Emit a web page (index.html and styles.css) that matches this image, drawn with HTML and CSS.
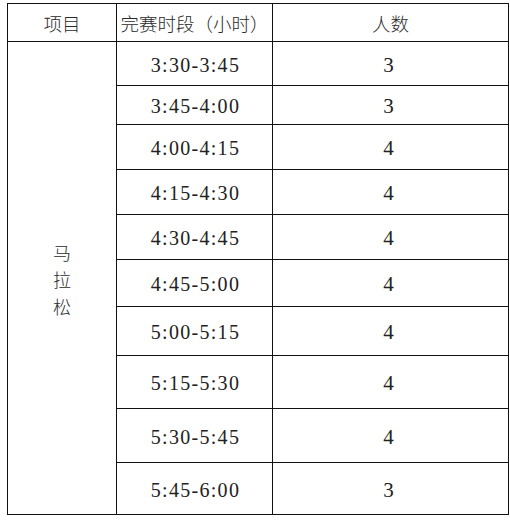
FILE: index.html
```html
<!DOCTYPE html>
<html lang="zh-CN">
<head>
<meta charset="utf-8">
<title>马拉松完赛时段</title>
<link rel="stylesheet" href="styles.css">
</head>
<body>
<div class="sheet">
  <div class="cell head">项目</div>
  <div class="cell head">完赛时段（小时）</div>
  <div class="cell head">人数</div>

  <div class="cell event"><span>马</span><span>拉</span><span>松</span></div>

  <div class="cell time r1">3:30-3:45</div><div class="cell num r1">3</div>
  <div class="cell time r2">3:45-4:00</div><div class="cell num r2">3</div>
  <div class="cell time r3">4:00-4:15</div><div class="cell num r3">4</div>
  <div class="cell time r4">4:15-4:30</div><div class="cell num r4">4</div>
  <div class="cell time r5">4:30-4:45</div><div class="cell num r5">4</div>
  <div class="cell time r6">4:45-5:00</div><div class="cell num r6">4</div>
  <div class="cell time r7">5:00-5:15</div><div class="cell num r7">4</div>
  <div class="cell time r8">5:15-5:30</div><div class="cell num r8">4</div>
  <div class="cell time r9">5:30-5:45</div><div class="cell num r9">4</div>
  <div class="cell time r10">5:45-6:00</div><div class="cell num r10">3</div>
</div>
</body>
</html>
```
FILE: styles.css
```css
html, body {
  margin: 0;
  padding: 0;
  background: #ffffff;
}

body {
  padding: 3px 0 0 7px;
  color: #222222;
}

.sheet {
  display: grid;
  grid-template-columns: 108px 155px 235px;
  grid-template-rows: 37px 43px 38px 44px 44px 44px 46px 48px 52px 53px 51px;
  gap: 1px;
  padding: 1px;
  width: max-content;
  background: #111111;
}

.cell {
  background: #ffffff;
  display: flex;
  align-items: center;
  justify-content: center;
  white-space: nowrap;
}

.head {
  font-family: "Noto Sans CJK SC", sans-serif;
  font-size: 18.5px;
  font-weight: 300;
  color: #2a2a2a;
  padding-top: 1px;
}

.event {
  grid-column: 1;
  grid-row: 2 / span 10;
  flex-direction: column;
  font-family: "Noto Sans CJK SC", sans-serif;
  font-size: 18px;
  font-weight: 300;
  color: #2a2a2a;
  line-height: 27px;
  padding-top: 2px;
}

.time {
  grid-column: 2;
  font-family: "Liberation Serif", serif;
  font-size: 20px;
  letter-spacing: 1.3px;
  padding-top: 3px;
  padding-left: 2px;
}

.num {
  grid-column: 3;
  font-family: "Liberation Serif", serif;
  font-size: 21px;
  padding-top: 3px;
  padding-right: 4px;
}

.r1 { grid-row: 2; }
.r2 { grid-row: 3; }
.r3 { grid-row: 4; }
.r4 { grid-row: 5; }
.r5 { grid-row: 6; }
.r6 { grid-row: 7; }
.r7 { grid-row: 8; }
.r8 { grid-row: 9; }
.r9 { grid-row: 10; }
.r10 { grid-row: 11; }
```
